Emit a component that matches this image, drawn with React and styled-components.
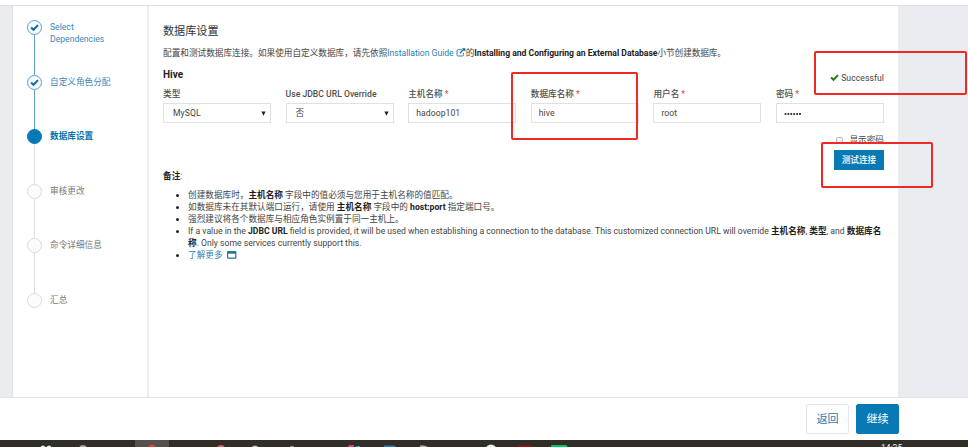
import React from "react";
import styled, { createGlobalStyle } from "styled-components";

const Global = createGlobalStyle`
  * { box-sizing: border-box; }
  body { margin: 0; overflow: hidden; background: #fff; }
`;

const Screen = styled.div`
  position: relative;
  display: flex;
  flex-direction: column;
  width: 968px;
  height: 447px;
  overflow: hidden;
  color: #444;
  font: 8.65px/12px Roboto, "Noto Sans CJK SC", sans-serif;
  white-space: nowrap;
`;

const TopBar = styled.header`
  height: 6px;
  flex: none;
  border-bottom: 1px solid #dcdfe1;
`;

const Body = styled.div`
  display: flex;
  height: 392px;
  flex: none;
  padding: 0 70px 0 12px;
  background: #eaecef;
  border-bottom: 1px solid #e1e3e5;
`;

const Sidebar = styled.nav`
  width: 137px;
  flex: none;
  padding: 14px 0 0 14px;
  background: #fff;
  border-left: 1px solid #e0e2e4;
  border-right: 2px solid #eceef0;
`;

const Step = styled.div`
  position: relative;
  display: flex;
  gap: 8px;
  height: 54.6px;
  color: ${({ $state }) => ($state === "todo" ? "#777" : $state === "current" ? "#0272ae" : "#3a87b9")};
  font-weight: ${({ $state }) => ($state === "current" ? 700 : 400)};
  line-height: 12px;
  &:not(:last-child)::after {
    content: "";
    position: absolute;
    left: 7px;
    top: 15px;
    width: 1px;
    height: 40px;
    background: ${({ $state }) => ($state === "done" ? "#5da0ca" : "#dedede")};
  }
`;

const Dot = styled.span`
  display: flex;
  flex: none;
  align-items: center;
  justify-content: center;
  width: 15px;
  height: 15px;
  border-radius: 50%;
  border: 1.2px solid ${({ $state }) => ($state === "todo" ? "#dadada" : $state === "current" ? "#0479b5" : "#5b9fc8")};
  background: ${({ $state }) => ($state === "current" ? "#0479b5" : $state === "todo" ? "#fcfcfc" : "#f4fcff")};
`;

const StepText = styled.span`
  padding-top: 1px;
`;

const Main = styled.main`
  display: flex;
  flex-direction: column;
  flex: 1;
  min-width: 0;
  padding: 17px 14px 0 14px;
  background: #fff;
`;

const Title = styled.h1`
  margin: 0;
  height: 16px;
  font-size: 11.1px;
  font-weight: 400;
  line-height: 17px;
  color: #333;
`;

const Intro = styled.p`
  margin: 8px 0 0;
  height: 12px;
  line-height: 12px;
`;

const Link = styled.a`
  color: #2b7fb5;
  letter-spacing: ${({ $spacing }) => $spacing || 0}px;
`;

const Strong = styled.b`
  color: #222;
  font-weight: 700;
  letter-spacing: ${({ $spacing }) => $spacing || 0}px;
`;

const Run = styled.span`
  letter-spacing: ${({ $spacing }) => $spacing || 0}px;
`;

const ServiceRow = styled.div`
  display: flex;
  justify-content: space-between;
  height: 20px;
  margin-top: 8px;
`;

const ServiceName = styled.h2`
  margin: 0;
  font-size: 10px;
  line-height: 15px;
  font-weight: 700;
  color: #222;
`;

const Status = styled.div`
  display: flex;
  align-items: center;
  gap: 2px;
  height: 21px;
`;

const Fields = styled.div`
  display: grid;
  grid-template-columns: repeat(6, 108px);
  column-gap: 14.6px;
`;

const Field = styled.div`
  display: flex;
  flex-direction: column;
  gap: 1px;
`;

const Label = styled.label`
  height: 15px;
  line-height: 15px;
  color: #505050;
  font-weight: 500;
`;

const Required = styled.span`
  color: #e0544b;
  margin-left: 2px;
`;

const Control = styled.div`
  display: flex;
  align-items: center;
  justify-content: space-between;
  height: 20px;
  padding: 0 4px 0 ${({ $select }) => ($select ? 9 : 7)}px;
  border: 1px solid #dfe2e4;
  letter-spacing: 0.06px;
`;

const ShowPassword = styled.label`
  display: flex;
  align-items: center;
  justify-content: flex-end;
  gap: 6px;
  height: 12px;
  margin-top: 11px;
`;

const Box = styled.span`
  width: 7px;
  height: 7px;
  border: 1px solid #bbb;
  border-radius: 1.5px;
  background: #f5f5f5;
`;

const TestButton = styled.button`
  align-self: flex-end;
  flex: none;
  width: 50px;
  height: 20px;
  margin-top: 3.5px;
  padding: 0;
  border: 0;
  background: #0879b3;
  color: #fff;
  font: inherit;
  font-weight: 500;
`;

const NoteTitle = styled.div`
  height: 12px;
`;

const Notes = styled.ul`
  margin: 7px 0 0;
  padding: 0 0 0 25px;
  line-height: 12.1px;
  li::marker { color: #222; }
`;

const NoteLine = styled.div`
  height: 12.1px;
`;

const Footer = styled.footer`
  display: flex;
  justify-content: flex-end;
  gap: 7px;
  flex: none;
  height: 42px;
  padding: 6px 69px 0 0;
  background: #fff;
`;

const FooterButton = styled.button`
  width: 43px;
  height: 30px;
  padding: 1px 0 0;
  border: 1px solid ${({ $primary }) => ($primary ? "#0879b3" : "#e1e6ea")};
  border-radius: 2px;
  background: ${({ $primary }) => ($primary ? "#0879b3" : "#fff")};
  color: ${({ $primary }) => ($primary ? "#fff" : "#2779ae")};
  font: 11.1px/28px Roboto, "Noto Sans CJK SC", sans-serif;
`;

const Taskbar = styled.div`
  display: flex;
  flex: none;
  height: 7px;
  overflow: hidden;
  background: #302e27;
`;

const TaskIcons = styled.svg`
  flex: none;
  width: 881px;
  height: 7px;
`;

const Clock = styled.span`
  color: #eee;
  font-size: 8.5px;
  line-height: 10px;
  padding-top: 3px;
`;

const Annotation = styled.div`
  position: absolute;
  left: ${({ $x }) => $x}px;
  top: ${({ $y }) => $y}px;
  width: ${({ $w }) => $w}px;
  height: ${({ $h }) => $h}px;
  border: 2px solid #f02922;
  border-radius: 2px;
  pointer-events: none;
`;

const InlineIcon = styled.svg`
  vertical-align: -1px;
`;

const Check = ({ color, size }) => (
  <svg width={size} height={size} viewBox="0 0 10 10">
    <path d="M1.2 5 3.9 7.5 8.9 2.4" fill="none" stroke={color} strokeWidth="2.2" />
  </svg>
);

const ExternalIcon = () => (
  <InlineIcon width="10" height="9" viewBox="0 0 10 9">
    <path d="M6 1.7H2.2Q1 1.7 1 2.9v3.9Q1 8 2.2 8h4Q7.4 8 7.4 6.8V5" fill="none" stroke="#2b7fb5" strokeWidth="1" />
    <path d="M3.8 5.4 8 1.2" stroke="#1e6c9f" strokeWidth="1.3" />
    <path d="M5.8.2h3.6v3.6z" fill="#1e6c9f" />
  </InlineIcon>
);

const WindowIcon = () => (
  <InlineIcon width="10" height="8" viewBox="0 0 10 8">
    <rect x=".6" y=".6" width="8.2" height="6.6" rx=".5" fill="#fff" stroke="#24749b" strokeWidth="1.2" />
    <path d="M.6 1.6h8.2" stroke="#24749b" strokeWidth="2.2" />
  </InlineIcon>
);

const Arrow = () => (
  <svg width="5" height="5" viewBox="0 0 5 5">
    <path d="M.4.5h4.2L2.5 4.7z" fill="#222" />
  </svg>
);

const Dots = () => (
  <svg width="18" height="4" viewBox="0 0 18 4">
    {[0, 1, 2, 3, 4, 5].map((i) => <circle key={i} cx={1.5 + i * 2.9} cy="2" r="1.05" fill="#222" />)}
  </svg>
);

const steps = [
  ["done", <>Select<br />Dependencies</>],
  ["done", "自定义角色分配"],
  ["current", "数据库设置"],
  ["todo", "审核更改"],
  ["todo", "命令详细信息"],
  ["todo", "汇总"],
];

const fields = [
  { label: "类型", value: "MySQL", select: true },
  { label: "Use JDBC URL Override", value: "否", select: true },
  { label: "主机名称", value: "hadoop101", required: true },
  { label: "数据库名称", value: "hive", required: true },
  { label: "用户名", value: "root", required: true },
  { label: "密码", value: <Dots />, required: true },
];

export default function App() {
  return (
    <Screen>
      <Global />
      <TopBar />
      <Body>
        <Sidebar>
          {steps.map(([state, text], i) => (
            <Step key={i} $state={state}>
              <Dot $state={state}>{state === "done" && <Check color="#17699d" size={9} />}</Dot>
              <StepText>{text}</StepText>
            </Step>
          ))}
        </Sidebar>
        <Main>
          <Title>数据库设置</Title>
          <Intro>
            配置和测试数据库连接。如果使用自定义数据库，请先依照<Link $spacing={-0.03}>Installation Guide </Link><ExternalIcon />的<Strong $spacing={-0.02}>Installing and Configuring an External Database</Strong><Run $spacing={-0.08}>小节创建数据库。</Run>
          </Intro>
          <ServiceRow>
            <ServiceName>Hive</ServiceName>
            <Status><Check color="#2d7a16" size={9} /><Run $spacing={0.06}>Successful</Run></Status>
          </ServiceRow>
          <Fields>
            {fields.map((f) => (
              <Field key={f.label}>
                <Label>{f.label}{f.required && <Required>*</Required>}</Label>
                <Control $select={f.select}><span>{f.value}</span>{f.select && <Arrow />}</Control>
              </Field>
            ))}
          </Fields>
          <ShowPassword><Box />显示密码</ShowPassword>
          <TestButton>测试连接</TestButton>
          <NoteTitle><Strong>备注</Strong>:</NoteTitle>
          <Notes>
            <li>创建数据库时，<Strong>主机名称</Strong> 字段中的值必须与您用于主机名称的值匹配。</li>
            <li>如数据库未在其默认端口运行，请使用 <Strong>主机名称</Strong> 字段中的 <Strong>host:port</Strong> 指定端口号。</li>
            <li>强烈建议将各个数据库与相应角色实例置于同一主机上。</li>
            <li>
              <NoteLine>If a value in the <Strong>JDBC URL</Strong> field is provided, it will be used when establishing a connection to the database. This customized connection URL will override <Strong>主机名称</Strong>, <Strong>类型</Strong>, and <Strong>数据库名</Strong></NoteLine>
              <NoteLine><Strong>称</Strong>. Only some services currently support this.</NoteLine>
            </li>
            <li><Link>了解更多</Link>&nbsp; <WindowIcon /></li>
          </Notes>
        </Main>
      </Body>
      <Footer>
        <FooterButton>返回</FooterButton>
        <FooterButton $primary>继续</FooterButton>
      </Footer>
      <Taskbar>
        <TaskIcons viewBox="0 0 881 7">
          <rect x="135" width="34" height="7" fill="#55524d" />
          <circle cx="43" cy="8" r="2.5" fill="#eee" />
          <circle cx="49" cy="8" r="2.5" fill="#eee" />
          <circle cx="83" cy="9" r="4" fill="#aaa59b" />
          <circle cx="152" cy="9" r="4.5" fill="#dd4040" />
          <circle cx="221" cy="9" r="4" fill="#ed5965" />
          <circle cx="255" cy="9" r="3.5" fill="#a8cddd" />
          <circle cx="292" cy="9" r="3" fill="#a9a77b" />
          <path d="M349 5h5v2h-6z" fill="#ed3772" />
          <path d="M356 6h4v1h-4z" fill="#399bd5" />
          <rect x="384" y="5.5" width="11" height="2" fill="#2979c5" />
          <path d="M420 5.5h4l4 1.5h-8z" fill="#bdb79e" />
          <circle cx="491" cy="10" r="5.5" fill="#eee" />
          <ellipse cx="525" cy="8" rx="10" ry="2.5" fill="#b90808" />
          <rect x="551" y="5" width="16" height="3" rx="1" fill="#08c55b" />
        </TaskIcons>
        <Clock>14:25</Clock>
      </Taskbar>
      <Annotation $x={511} $y={72} $w={127} $h={68} />
      <Annotation $x={814} $y={51} $w={153} $h={44} />
      <Annotation $x={821} $y={142} $w={112} $h={46} />
    </Screen>
  );
}
